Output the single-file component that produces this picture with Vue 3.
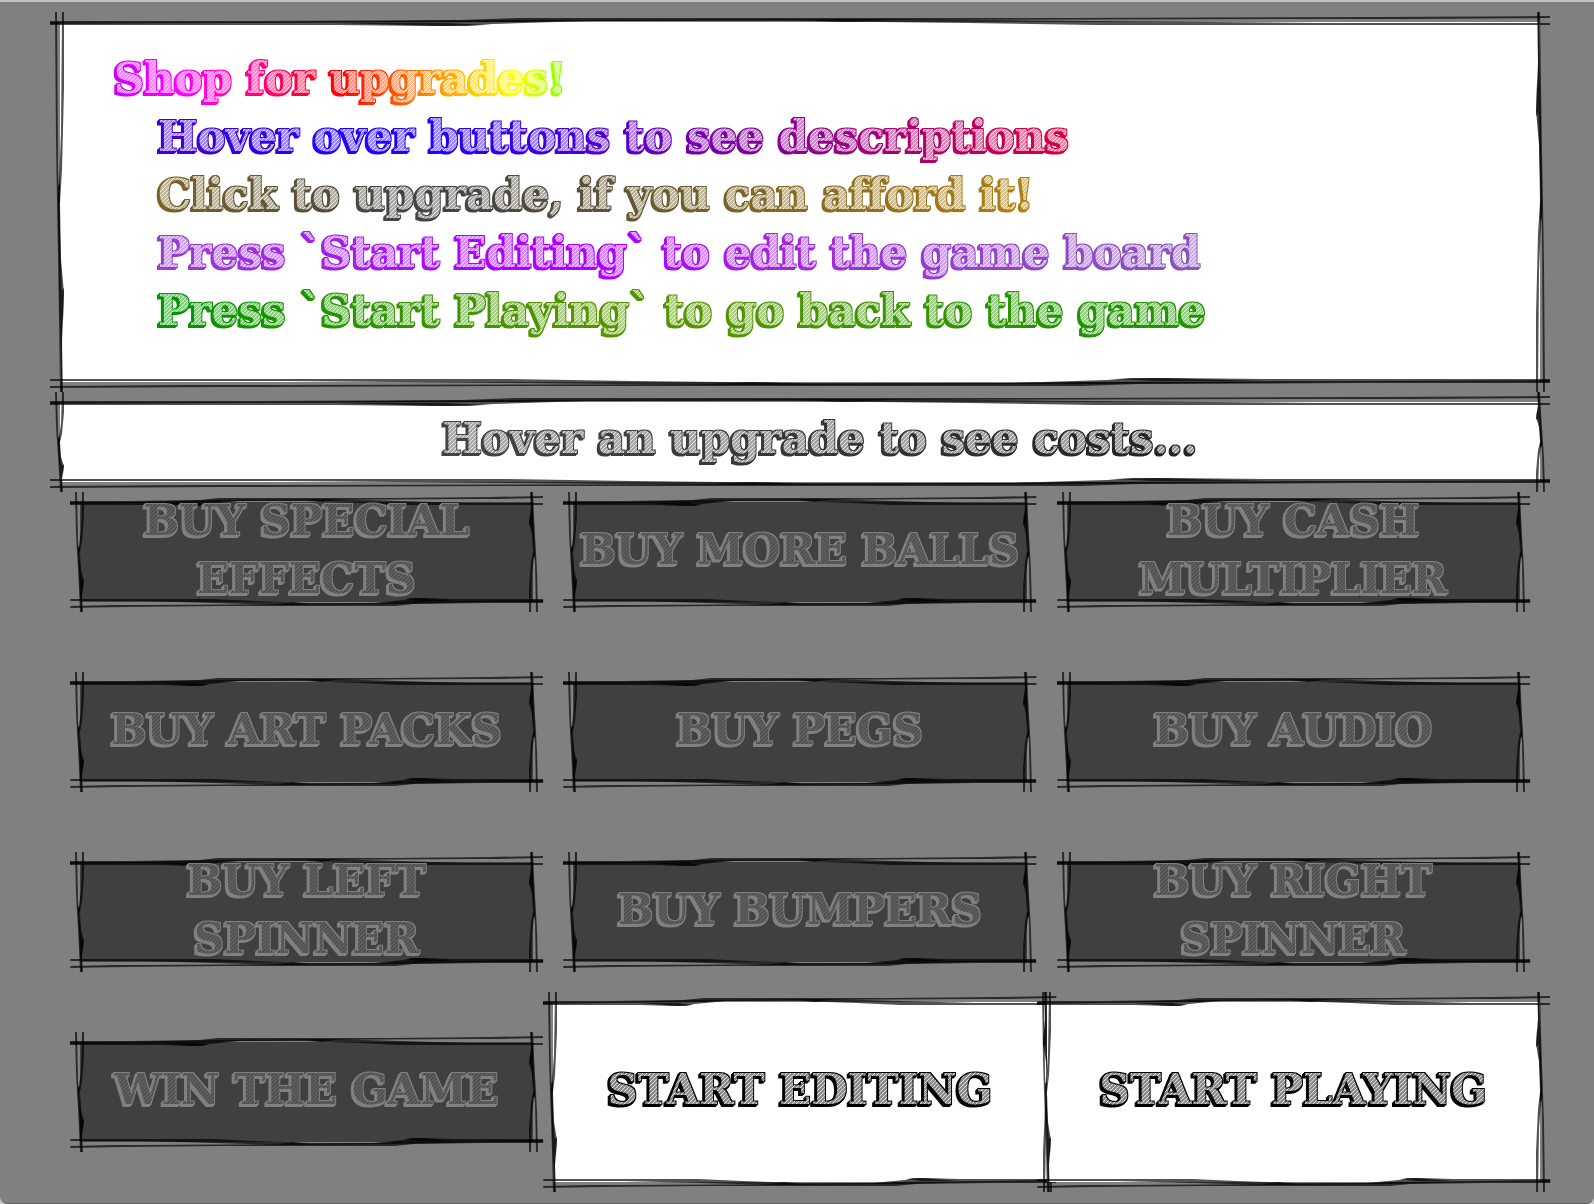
<script setup>
import { defineComponent, h } from 'vue'

// Two loose pen strokes along one edge; the opposite edge is the same drawing turned by 180 degrees.
const horizontal = [
  'M0 9 L36 9 L60 9 L130 8 L148 6 L250 6 L320 6 L420 5 L474 4 L474 6 L430 7 L400 7 L250 8 L160 9 L148 10 L60 11 L0 12 Z',
  'M0 10 L60 10 L148 8 L250 7 L262 7 L330 9 L400 11 L474 11 L474 13 L330 13 L290 11 L235 9 L170 9 L140 12 L132 14 L120 14 L90 13 L0 13 Z',
  'M90 11 L125 11 L138 13 L124 14 Z M235 8 L265 8 L252 10 Z',
]
const vertical = [
  'M5 0 L7 0 L8 50 L9 58 L11 80 L12 90 L12 120 L10 120 L9 96 L8 76 L7 60 L6 40 Z',
  'M12 0 L14 0 L14 24 L12 50 L10 60 L11 78 L14 89 L13 98 L12 104 L13 120 L11 120 L10 100 L9 80 L8 62 L11 38 Z',
  'M8 55 L10 54 L10 60 L8 61 Z M12 88 L14 87 L13 96 L12 98 Z',
]

const SketchFrame = defineComponent({
  render() {
    const edge = (side, viewBox, paths) =>
      h(
        'svg',
        { class: ['edge', side], viewBox, preserveAspectRatio: 'none' },
        paths.map((d) => h('path', { d }))
      )
    return h('span', { class: 'frame', 'aria-hidden': 'true' }, [
      edge('top', '0 0 474 16', horizontal),
      edge('bottom', '0 0 474 16', horizontal),
      edge('left', '0 0 16 120', vertical),
      edge('right', '0 0 16 120', vertical),
    ])
  },
})

const tips = [
  { text: 'Hover over buttons to see descriptions', tone: 'indigo' },
  { text: 'Click to upgrade, if you can afford it!', tone: 'bronze' },
  { text: 'Press `Start Editing` to edit the game board', tone: 'violet' },
  { text: 'Press `Start Playing` to go back to the game', tone: 'green' },
]

const actions = [
  { text: 'BUY SPECIAL\nEFFECTS' },
  { text: 'BUY MORE BALLS' },
  { text: 'BUY CASH\nMULTIPLIER' },
  { text: 'BUY ART PACKS' },
  { text: 'BUY PEGS' },
  { text: 'BUY AUDIO' },
  { text: 'BUY LEFT\nSPINNER' },
  { text: 'BUY BUMPERS' },
  { text: 'BUY RIGHT\nSPINNER' },
  { text: 'WIN THE GAME' },
  { text: 'START EDITING', open: true },
  { text: 'START PLAYING', open: true },
]

const chalks = [
  { id: 'chalk-light', fill: '#fff' },
  { id: 'chalk-dark', fill: '#404040' },
]
</script>

<template>
  <main class="shop">
    <svg class="defs" aria-hidden="true">
      <defs>
        <filter
          v-for="f in chalks"
          :id="f.id"
          :key="f.id"
          x="-10"
          y="-10"
          width="1600"
          height="200"
          filterUnits="userSpaceOnUse"
          color-interpolation-filters="sRGB"
        >
          <feMorphology in="SourceGraphic" operator="dilate" radius="1" result="thick" />
          <feOffset in="thick" dx="-1" dy="1" result="s1" />
          <feOffset in="thick" dx="-2" dy="2" result="s2" />
          <feFlood :flood-color="f.fill" flood-opacity="0.55" result="wash" />
          <feComposite in="wash" in2="SourceAlpha" operator="in" result="inner" />
          <feFlood x="0" y="3" width="1" height="1" :flood-color="f.fill" flood-opacity="0.7" result="a" />
          <feFlood x="1" y="2" width="1" height="1" :flood-color="f.fill" flood-opacity="0.7" result="b" />
          <feFlood x="2" y="1" width="1" height="1" :flood-color="f.fill" flood-opacity="0.7" result="c" />
          <feFlood x="3" y="0" width="1" height="1" :flood-color="f.fill" flood-opacity="0.7" result="d" />
          <feMerge x="0" y="0" width="4" height="4" result="cell">
            <feMergeNode in="a" />
            <feMergeNode in="b" />
            <feMergeNode in="c" />
            <feMergeNode in="d" />
          </feMerge>
          <feTile in="cell" result="tiles" />
          <feComposite in="tiles" in2="SourceAlpha" operator="in" result="hatch" />
          <feMerge>
            <feMergeNode in="s2" />
            <feMergeNode in="s1" />
            <feMergeNode in="thick" />
            <feMergeNode in="inner" />
            <feMergeNode in="hatch" />
          </feMerge>
        </filter>
      </defs>
    </svg>

    <section class="panel intro">
      <SketchFrame />
      <h1 class="lettering rainbow">Shop for upgrades!</h1>
      <ul class="tips">
        <li v-for="tip in tips" :key="tip.text">
          <span class="lettering" :class="tip.tone">{{ tip.text }}</span>
        </li>
      </ul>
    </section>

    <section class="panel costs">
      <SketchFrame />
      <p class="lettering slate">Hover an upgrade to see costs...</p>
    </section>

    <div class="actions">
      <button
        v-for="action in actions"
        :key="action.text"
        type="button"
        :class="action.open ? 'open' : 'locked'"
        :disabled="!action.open"
      >
        <SketchFrame />
        <span class="lettering">{{ action.text }}</span>
      </button>
    </div>
  </main>
</template>

<style>
body {
  margin: 0;
  background: #c8c8c8;
}

.frame {
  position: absolute;
  inset: -10px;
  pointer-events: none;
}

.frame .edge {
  position: absolute;
  display: block;
  fill: #000;
  fill-opacity: 0.68;
}

.frame .top,
.frame .bottom {
  left: 0;
  width: 100%;
  height: 16px;
}

.frame .left,
.frame .right {
  top: 0;
  width: 16px;
  height: 100%;
}

.frame .top {
  top: 0;
}

.frame .bottom {
  bottom: 0;
  transform: rotate(180deg);
}

.frame .left {
  left: 0;
}

.frame .right {
  right: 0;
  transform: rotate(180deg);
}
</style>

<style scoped>
.shop {
  box-sizing: border-box;
  min-height: 100vh;
  padding: 20px 54px;
  background: #808080;
  border-top: 2px solid #c0c0c0;
  border-bottom: 1px solid #606060;
  border-radius: 0 0 8px 8px;
}

.defs {
  position: absolute;
  width: 0;
  height: 0;
}

.panel {
  position: relative;
  box-sizing: border-box;
  margin-left: 6px;
  background: #fff;
}

.intro {
  min-height: 360px;
  padding: 28px 54px;
}

.costs {
  min-height: 80px;
  margin-top: 20px;
  padding: 8px 0 8px 40px;
  text-align: center;
}

.lettering {
  display: inline-block;
  margin: 0;
  font-family: "DejaVu Serif", serif;
  font-size: 42px;
  font-weight: 700;
  font-variant-ligatures: none;
  line-height: 58px;
  white-space: pre;
  filter: url(#chalk-light);
}

.tips {
  margin: 0;
  padding: 0 0 0 44px;
  list-style: none;
}

.tips li {
  height: 58px;
}

.rainbow,
.indigo,
.bronze,
.violet,
.green,
.slate {
  color: transparent;
  background-clip: text;
  -webkit-background-clip: text;
}

.rainbow {
  display: block;
  width: fit-content;
  background-image: linear-gradient(90deg, #c800ff, #f0f 15%, #ff0080 32%, #f00 50%, #f60 65%, #fc0 80%, #ff0 89%, #cf0 94%, #80ff00);
}

.indigo {
  background-image: linear-gradient(90deg, #40c, #20f 20%, #20f 29%, #4400d8 46%, #70a 60%, #8c0090 70%, #a8006e 82%, #d80040);
}

.bronze {
  background-image: linear-gradient(90deg, #7a6428, #444 27%, #444 35%, #5a5038 48%, #7a6428 66%, #b08010);
}

.violet {
  background-image: linear-gradient(90deg, #9440cc, #aa00ff 34%, #aa00ff 44%, #a420e0 56%, #9440cc 78%, #8855b8);
}

.green {
  background-image: linear-gradient(90deg, #009400, #559400 40%, #559400 54%, #209400 86%, #229400);
}

.slate {
  background-image: linear-gradient(90deg, #444, #333 60%, #222);
}

.actions {
  display: grid;
  grid-template-columns: repeat(3, 1fr);
  grid-auto-rows: 180px;
  margin: -20px 0 0 6px;
}

button {
  position: relative;
  display: flex;
  align-items: center;
  justify-content: center;
  padding: 0 0 4px;
  border: 0;
  background: #fff;
  color: #000;
  text-align: center;
}

.locked {
  margin: 40px 20px;
  background: #404040;
  color: #808080;
}

.locked .lettering {
  margin: -10px 0;
  filter: url(#chalk-dark);
}
</style>
